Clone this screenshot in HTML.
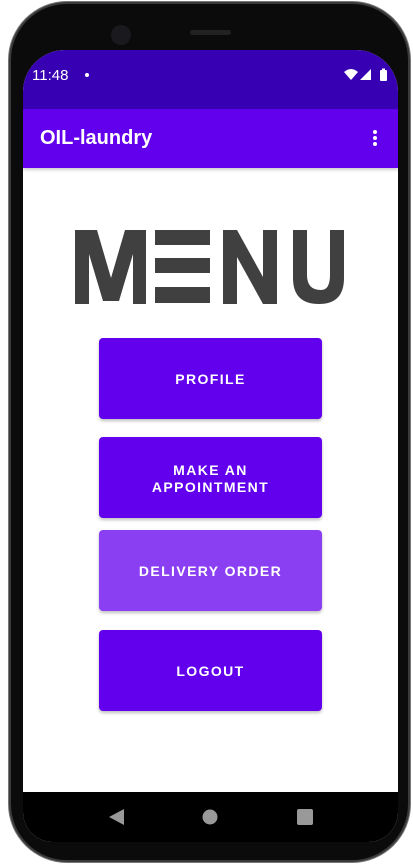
<!DOCTYPE html>
<html><head><meta charset="utf-8"><style>
*{margin:0;padding:0;box-sizing:border-box}
body{width:413px;height:866px;background:#fff;position:relative;overflow:hidden;font-family:"Liberation Sans",sans-serif}
.phone{position:absolute;left:9px;top:2px;width:401px;height:860px;border-radius:58px;background:#0b0b0c;border:2px solid #3a3a3a;box-shadow:0 0 0 1px #777}
.screen{position:absolute;left:23px;top:50px;width:375px;height:792px;border-radius:42px 42px 30px 30px;overflow:hidden;background:#fff}
.status{height:59px;background:#3700b3;color:#fff;font-size:15px;position:relative}
.appbar{height:59px;background:#6200ee;color:#fff;font-size:20px;position:relative;box-shadow:0 2px 3px rgba(0,0,0,.2)}
.btn{position:absolute;left:76px;width:223px;height:81px;background:#6200ee;border-radius:4px;color:#fff;font-size:14px;font-weight:bold;letter-spacing:1.4px;display:flex;align-items:center;justify-content:center;text-align:center;line-height:17px;box-shadow:0 2px 3px rgba(0,0,0,.25);padding-top:2px}
.nav{position:absolute;left:0;top:742px;width:375px;height:50px;background:#000}
</style></head><body>
<div class="phone"></div>
<div style="position:absolute;left:111px;top:25px;width:20px;height:20px;border-radius:50%;background:#1a1a1e"></div>
<div style="position:absolute;left:190px;top:30px;width:41px;height:5px;border-radius:3px;background:#222"></div>
<div class="screen">
 <div class="status">
  <span style="position:absolute;left:9px;top:17px">11:48</span>
  <span style="position:absolute;left:62px;top:23px;width:4px;height:4px;border-radius:50%;background:#fff"></span>
  <svg style="position:absolute;left:321px;top:18px" width="44" height="16" viewBox="0 0 44 16">
   <path d="M0 4 Q7 -2 14 4 L7 12Z" fill="#fff"/>
   <path d="M27 1 L27 12 L16 12Z" fill="#fff"/>
   <rect x="36" y="2" width="7" height="11" rx="1" fill="#fff"/><rect x="38" y="0.5" width="3" height="2" fill="#fff"/>
  </svg>
 </div>
 <div class="appbar">
  <span style="position:absolute;left:17px;top:18px;font-weight:bold">OIL-laundry</span>
  <div style="position:absolute;left:350px;top:21px;width:4px">
   <div style="width:4px;height:4px;border-radius:50%;background:#fff;margin-bottom:2px"></div>
   <div style="width:4px;height:4px;border-radius:50%;background:#fff;margin-bottom:2px"></div>
   <div style="width:4px;height:4px;border-radius:50%;background:#fff"></div>
  </div>
 </div>
 <svg style="position:absolute;left:0;top:0" width="375" height="792">
  <g fill="#404040">
   <path d="M52 180 H74 L88 228 L102 180 H123 V254 H110 V204 L96 251 H80 L66 204 V254 H52Z"/>
   <rect x="132" y="180" width="55" height="15"/>
   <rect x="132" y="208" width="55" height="15"/>
   <rect x="132" y="237" width="55" height="16"/>
   <path d="M200 180 H214 L240 227 V180 H254 V254 H240 L214 207 V254 H200Z"/>
   <path d="M270 180 H284 V225 Q284 240 298 240 Q307 240 307 225 V180 H321 V228 Q321 254 296 254 Q270 254 270 228Z"/>
  </g>
 </svg>
 <div class="btn" style="top:288px">PROFILE</div>
 <div class="btn" style="top:387px">MAKE AN<br>APPOINTMENT</div>
 <div class="btn" style="top:480px;background:#8a40f2">DELIVERY ORDER</div>
 <div class="btn" style="top:580px">LOGOUT</div>
 <div class="nav">
  <svg width="375" height="50">
   <path d="M101 17 L101 33 L86 25Z" fill="#999"/>
   <circle cx="187" cy="25" r="7.5" fill="#999"/>
   <rect x="274" y="17" width="16" height="16" rx="2" fill="#999"/>
  </svg>
 </div>
</div>
</body></html>
